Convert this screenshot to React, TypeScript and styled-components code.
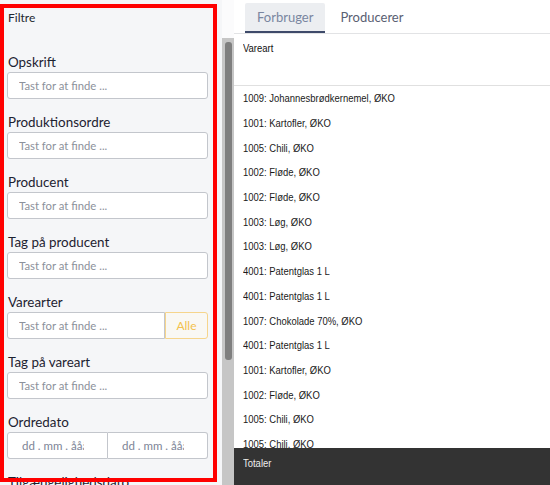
import React from "react";
import styled, { createGlobalStyle } from "styled-components";

const GlobalStyle = createGlobalStyle`
    html, body {
        margin: 0;
        padding: 0;
        background: #ffffff;
        font-family: Lato, "Open Sans", sans-serif;
    }
    * {
        box-sizing: border-box;
    }
`;

const Page = styled.div`
    display: flex;
    width: 550px;
    height: 485px;
    overflow: hidden;
`;

const Sidebar = styled.aside`
    position: relative;
    width: 222px;
    flex-shrink: 0;
    height: 100%;
    overflow: hidden;
    background-color: #f5f6f8;
    padding: 10px 14px 0 7px;
`;

const Highlight = styled.div`
    position: absolute;
    top: 4px;
    left: 0;
    width: 217px;
    height: 478px;
    border: 4px solid #ff0000;
    pointer-events: none;
`;

const SidebarTitle = styled.div`
    font-size: 12px;
    line-height: 16px;
    color: #222630;
    padding-left: 1px;
    margin-bottom: 27px;
`;

const Field = styled.div`
    display: flex;
    flex-direction: column;
    margin-bottom: 14px;
`;

const Label = styled.label`
    font-size: 13.4px;
    line-height: 18px;
    color: #1d2230;
    padding-left: 1px;
    margin-bottom: 1px;
    white-space: nowrap;
`;

const TextInput = styled.input<{ $grouped?: boolean }>`
    height: 27px;
    flex: ${(p) => (p.$grouped ? "1 1 0" : "0 0 auto")};
    width: ${(p) => (p.$grouped ? "0" : "100%")};
    min-width: 0;
    border: 1px solid #c3c6cc;
    border-radius: ${(p) => (p.$grouped ? "3px 0 0 3px" : "3px")};
    background: #ffffff;
    padding: 0 11px;
    font-family: Lato, sans-serif;
    font-size: 11.3px;
    color: #333;
    outline: none;

    &::placeholder {
        color: #8c919b;
    }
`;

const InputGroup = styled.div`
    display: flex;
    height: 27px;
`;

const AddonButton = styled.button`
    width: 43px;
    flex-shrink: 0;
    height: 27px;
    border: 1px solid #f6d58c;
    border-radius: 0 3px 3px 0;
    background: #f9f8f4;
    color: #f3c24e;
    font-family: Lato, sans-serif;
    font-size: 12px;
    padding: 0;
`;

const DateRow = styled.div`
    display: flex;
    height: 27px;
`;

const DateBox = styled.div<{ $side: "left" | "right" }>`
    flex: 1;
    display: flex;
    align-items: center;
    padding-left: 14px;
    background: #ffffff;
    border: 1px solid #c3c6cc;
    border-left-width: ${(p) => (p.$side === "right" ? "0" : "1px")};
    border-radius: ${(p) => (p.$side === "left" ? "3px 0 0 3px" : "0 3px 3px 0")};
`;

const DateText = styled.span`
    display: block;
    width: 62px;
    overflow: hidden;
    white-space: nowrap;
    font-size: 11.5px;
    color: #7d8496;
`;

const ScrollTrack = styled.div`
    width: 12px;
    flex-shrink: 0;
    height: 100%;
    display: flex;
    flex-direction: column;
    background: #fbfbfc;
`;

const TrackBody = styled.div`
    margin-top: 38px;
    flex: 1;
    background: #c6c6c6;
    padding: 4px 2px 0 3px;
`;

const Thumb = styled.div`
    height: 318px;
    border-radius: 3px;
    background: #7f7f7f;
`;

const Main = styled.main`
    flex: 1;
    display: flex;
    flex-direction: column;
    height: 100%;
    min-width: 0;
`;

const TabBar = styled.div`
    display: flex;
    gap: 3px;
    height: 34px;
    padding: 3px 0 0 11px;
    border-bottom: 1px solid #e2e3e5;
`;

const Tab = styled.div<{ $active?: boolean }>`
    min-width: 80px;
    height: 30px;
    padding: 0 12px;
    display: flex;
    align-items: center;
    justify-content: center;
    font-size: 13px;
    color: ${(p) => (p.$active ? "#7a86a0" : "#596072")};
    background: ${(p) => (p.$active ? "#eceef1" : "transparent")};
    border-bottom: 2px solid ${(p) => (p.$active ? "#3e4a6a" : "transparent")};
    border-radius: 2px 2px 0 0;
`;

/* the table uses a narrow sans; there is no condensed Arial installed, so squeeze it */
const Narrow = styled.span`
    display: inline-block;
    font-family: "Liberation Sans", Arial, sans-serif;
    font-size: 11px;
    line-height: 14px;
    white-space: nowrap;
    transform: scaleX(0.86);
    transform-origin: left center;
`;

const TableHead = styled.div`
    display: flex;
    align-items: flex-start;
    height: 52px;
    padding: 7px 9px 0;
    border-bottom: 1px solid #e0e0e0;
    color: #111;
`;

const List = styled.div`
    flex: 1;
    overflow: hidden;
`;

const Row = styled.div`
    height: 24.7px;
    display: flex;
    align-items: center;
    padding-left: 9px;
    color: #1a1a1a;
`;

const Footer = styled.div`
    display: flex;
    align-items: flex-start;
    height: 37px;
    flex-shrink: 0;
    background: #333333;
    padding: 8px 9px 0;
    color: #eeeeee;
`;

const PLACEHOLDER = "Tast for at finde ...";

const items = [
    "1009: Johannesbrødkernemel, ØKO",
    "1001: Kartofler, ØKO",
    "1005: Chili, ØKO",
    "1002: Fløde, ØKO",
    "1002: Fløde, ØKO",
    "1003: Løg, ØKO",
    "1003: Løg, ØKO",
    "4001: Patentglas 1 L",
    "4001: Patentglas 1 L",
    "1007: Chokolade 70%, ØKO",
    "4001: Patentglas 1 L",
    "1001: Kartofler, ØKO",
    "1002: Fløde, ØKO",
    "1005: Chili, ØKO",
    "1005: Chili, ØKO",
];

const TextField: React.FC<{ label: string }> = ({ label }) => (
    <Field>
        <Label>{label}</Label>
        <TextInput placeholder={PLACEHOLDER} />
    </Field>
);

export default function App() {
    return (
        <>
            <GlobalStyle />
            <Page>
                <Sidebar>
                    <SidebarTitle>Filtre</SidebarTitle>
                    <TextField label="Opskrift" />
                    <TextField label="Produktionsordre" />
                    <TextField label="Producent" />
                    <TextField label="Tag på producent" />
                    <Field>
                        <Label>Varearter</Label>
                        <InputGroup>
                            <TextInput $grouped placeholder={PLACEHOLDER} />
                            <AddonButton>Alle</AddonButton>
                        </InputGroup>
                    </Field>
                    <TextField label="Tag på vareart" />
                    <Field>
                        <Label>Ordredato</Label>
                        <DateRow>
                            <DateBox $side="left">
                                <DateText>dd . mm . åååå</DateText>
                            </DateBox>
                            <DateBox $side="right">
                                <DateText>dd . mm . åååå</DateText>
                            </DateBox>
                        </DateRow>
                    </Field>
                    <Field>
                        <Label>Tilgængelighedsdato</Label>
                    </Field>
                    <Highlight />
                </Sidebar>
                <ScrollTrack>
                    <TrackBody>
                        <Thumb />
                    </TrackBody>
                </ScrollTrack>
                <Main>
                    <TabBar>
                        <Tab $active>Forbruger</Tab>
                        <Tab>Producerer</Tab>
                    </TabBar>
                    <TableHead>
                        <Narrow>Vareart</Narrow>
                    </TableHead>
                    <List>
                        {items.map((item, i) => (
                            <Row key={i}>
                                <Narrow>{item}</Narrow>
                            </Row>
                        ))}
                    </List>
                    <Footer>
                        <Narrow>Totaler</Narrow>
                    </Footer>
                </Main>
            </Page>
        </>
    );
}
